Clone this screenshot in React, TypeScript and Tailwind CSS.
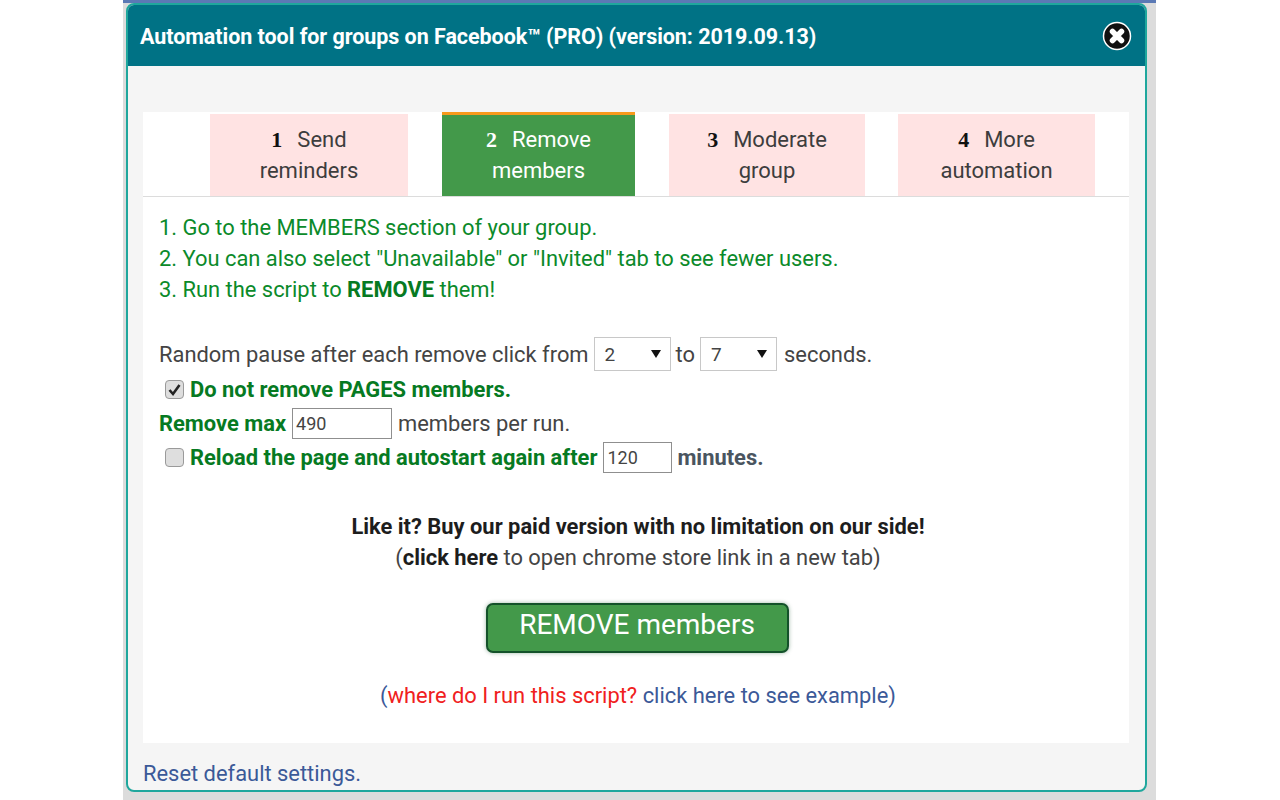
import React from 'react'

const tabs = [
  { num: '1', top: 'Send', bottom: 'reminders', width: 'w-[198px]' },
  { num: '2', top: 'Remove', bottom: 'members', width: 'w-[193px]', active: true },
  { num: '3', top: 'Moderate', bottom: 'group', width: 'w-[196px]' },
  { num: '4', top: 'More', bottom: 'automation', width: 'w-[197px] -ml-[1px]' },
]

function CloseIcon() {
  return (
    <svg width="30" height="30" viewBox="0 0 30 30">
      <circle cx="15" cy="15" r="13.5" fill="#111" stroke="#fff" strokeWidth="1.5" />
      <path d="M10.5 10.5 L19.5 19.5 M19.5 10.5 L10.5 19.5" stroke="#fff" strokeWidth="5.5" strokeLinecap="round" />
    </svg>
  )
}

function SelectBox({ value }: { value: string }) {
  return (
    <span className="inline-flex items-center justify-between w-[77px] h-[34px] bg-white border border-[#c8c8c8] pl-[10px] pr-[9px] text-[#444]">
      <span className="text-[19px]">{value}</span>
      <span className="w-0 h-0 border-l-[5px] border-r-[5px] border-t-[8px] border-l-transparent border-r-transparent border-t-[#111]" />
    </span>
  )
}

function CheckBox({ checked }: { checked?: boolean }) {
  return (
    <span className="w-[19px] h-[19px] rounded-[4px] border border-[#9a9a9a] bg-[#dedede] flex items-center justify-center">
      {checked && (
        <svg width="15" height="15" viewBox="0 0 15 15">
          <path d="M2.5 8 L6 12 L12.5 3" fill="none" stroke="#222" strokeWidth="2.6" />
        </svg>
      )}
    </span>
  )
}

export default function App() {
  return (
    <div className="w-[1280px] h-[800px] bg-white overflow-hidden font-['Roboto',sans-serif]">
      <div className="w-[1033px] h-[800px] ml-[123px] bg-[#dcdcdc] border-t-[3px] border-[#5b79b5] pl-[3px]">
        <div className="w-[1021px] h-[789px] rounded-[8px] overflow-hidden border-2 border-[#1fa79d] bg-[#f5f5f5] flex flex-col">
          <div className="h-[61px] shrink-0 bg-[#007285] flex items-center justify-between pl-[12px] pr-[13px]">
            <span className="mt-[3px] text-white font-bold text-[21.5px] tracking-[-0.05px]">
              Automation tool for groups on Facebook™ (PRO) (version: 2019.09.13)
            </span>
            <CloseIcon />
          </div>

          <div className="ml-[15px] mr-[16px] mt-[46px] h-[631px] bg-white flex flex-col">
            <div className="h-[85px] shrink-0 border-b border-[#dcdcdc] flex items-end pl-[67px] gap-[34px]">
              {tabs.map(tab => (
                <div
                  key={tab.num}
                  className={`${tab.width} flex flex-col items-center justify-center text-[22px] leading-[31px] ${
                    tab.active
                      ? 'h-[84px] pb-[2px] bg-[#43994a] border-t-[3px] border-[#f7991c] text-white'
                      : 'h-[82px] bg-[#ffe3e3] text-[#3d3d3d]'
                  }`}
                >
                  <div>
                    <span className={`font-['Liberation_Serif',serif] font-bold mr-[15px] ${tab.active ? 'text-white' : 'text-[#111]'}`}>
                      {tab.num}
                    </span>
                    {tab.top}
                  </div>
                  <div>{tab.bottom}</div>
                </div>
              ))}
            </div>

            <div className="px-[16px] pt-[15px] text-[21.9px] leading-[31px] text-[#444]">
              <div className="text-[#0b8a2a]">
                <div>1. Go to the MEMBERS section of your group.</div>
                <div>2. You can also select "Unavailable" or "Invited" tab to see fewer users.</div>
                <div>
                  3. Run the script to <b className="text-[#067a22]">REMOVE</b> them!
                </div>
              </div>

              <div className="mt-[31px] h-[36px] flex items-center gap-[5px]">
                <span>Random pause after each remove click from</span>
                <SelectBox value="2" />
                <span>to</span>
                <SelectBox value="7" />
                <span className="ml-[2px]">seconds.</span>
              </div>

              <div className="h-[34px] flex items-center pl-[6px] gap-[6px] font-bold text-[#067a22]">
                <CheckBox checked />
                <span>Do not remove PAGES members.</span>
              </div>

              <div className="h-[34px] flex items-center gap-[6px]">
                <span className="font-bold text-[#067a22]">Remove max</span>
                <span className="w-[100px] h-[31px] bg-white border border-[#8f8f8f] pl-[3px] text-[18px] leading-[29px] text-[#444]">490</span>
                <span>members per run.</span>
              </div>

              <div className="h-[34px] flex items-center pl-[6px] gap-[6px]">
                <CheckBox />
                <span className="font-bold text-[#067a22]">Reload the page and autostart again after</span>
                <span className="w-[69px] h-[31px] bg-white border border-[#8f8f8f] pl-[3px] text-[18px] leading-[29px] text-[#444]">120</span>
                <span className="-ml-[1px] font-bold text-[#4a5560]">minutes.</span>
              </div>

              <div className="mt-[37px] pl-[4px] text-center">
                <div className="font-bold text-[#1d1d1d]">Like it? Buy our paid version with no limitation on our side!</div>
                <div>
                  (<b className="text-[#1d1d1d]">click here</b> to open chrome store link in a new tab)
                </div>
              </div>

              <div className="mt-[30px] pl-[2px] flex justify-center">
                <button className="w-[303px] h-[50px] rounded-[7px] bg-[#43994a] border-2 border-[#14522a] text-white text-[28px] leading-none pb-[6px] shadow-[0_0_4px_rgba(20,80,40,0.4)]">
                  REMOVE members
                </button>
              </div>

              <div className="mt-[27px] pl-[4px] text-center text-[#3b5998]">
                (<span className="text-[#f02020]">where do I run this script?</span> click here to see example)
              </div>
            </div>
          </div>

          <div className="mt-[15px] pl-[15px] text-[21.9px] leading-[31px] text-[#3b5998]">Reset default settings.</div>
        </div>
      </div>
    </div>
  )
}
